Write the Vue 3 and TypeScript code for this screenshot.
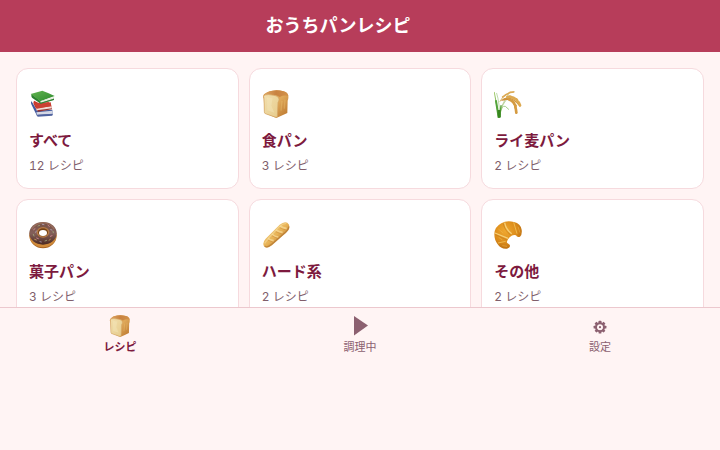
<script setup lang="ts">
import { ref } from 'vue'

interface Category {
  icon: string
  name: string
  count: number
}

interface Tab {
  id: string
  icon: string
  label: string
}

const categories: Category[] = [
  { icon: 'books', name: 'すべて', count: 12 },
  { icon: 'bread', name: '食パン', count: 3 },
  { icon: 'rye', name: 'ライ麦パン', count: 2 },
  { icon: 'donut', name: '菓子パン', count: 3 },
  { icon: 'baguette', name: 'ハード系', count: 2 },
  { icon: 'croissant', name: 'その他', count: 2 },
]

const tabs: Tab[] = [
  { id: 'recipes', icon: 'bread', label: 'レシピ' },
  { id: 'cooking', icon: 'play', label: '調理中' },
  { id: 'settings', icon: 'gear', label: '設定' },
]

const activeTab = ref('recipes')
const gearTeeth = [0, 45, 90, 135, 180, 225, 270, 315]
</script>

<template>
  <svg class="sprite" width="0" height="0" aria-hidden="true">
    <defs>
      <linearGradient id="g-green" x1="0" y1="0" x2="1" y2="1">
        <stop offset="0" stop-color="#63b450" /><stop offset="1" stop-color="#2c8a2c" />
      </linearGradient>
      <linearGradient id="g-front" x1="0" y1="0" x2="1" y2="1">
        <stop offset="0" stop-color="#f2dfae" /><stop offset="1" stop-color="#e6cb8b" />
      </linearGradient>
      <linearGradient id="g-side" x1="0" y1="0" x2="1" y2="1">
        <stop offset="0" stop-color="#d99645" /><stop offset=".5" stop-color="#dfa95a" /><stop offset="1" stop-color="#b8722a" />
      </linearGradient>
      <linearGradient id="g-top" x1="0" y1="0" x2="1" y2="0">
        <stop offset="0" stop-color="#dba766" /><stop offset=".5" stop-color="#c98240" /><stop offset="1" stop-color="#d2924a" />
      </linearGradient>
      <linearGradient id="g-stem" x1="0" y1="0" x2="0" y2="1">
        <stop offset="0" stop-color="#a6cf72" /><stop offset="1" stop-color="#3b8b1e" />
      </linearGradient>
      <linearGradient id="g-glaze" x1="0" y1="0" x2="0" y2="1">
        <stop offset="0" stop-color="#765044" /><stop offset=".5" stop-color="#84605a" /><stop offset="1" stop-color="#4c2920" />
      </linearGradient>
      <linearGradient id="g-loaf" x1="0.2" y1="0.2" x2="0.8" y2="0.8">
        <stop offset="0" stop-color="#f2cd7c" /><stop offset=".5" stop-color="#e8b356" /><stop offset="1" stop-color="#b97931" />
      </linearGradient>
      <radialGradient id="g-croissant" cx=".4" cy=".35" r=".7">
        <stop offset="0" stop-color="#efa830" /><stop offset=".6" stop-color="#dc8c1b" /><stop offset="1" stop-color="#b66a10" />
      </radialGradient>
    </defs>

    <symbol id="icon-books" viewBox="0 0 84 84">
      <path d="M7 33 Q4 39 8 45 L23 76 L71 74 L70 59 L25 62Z" fill="#435a9e" />
      <path d="M22 67 L70 62 L71 71 L24 75Z" fill="#d5d8e5" />
      <path d="M22 74 L71 72 L70 77 L26 80Z" fill="#50639f" />
      <path d="M15 32 Q11 39 15 44 L23 60 L68 53 L65 37 L35 42Z" fill="#c9372b" />
      <path d="M22 55 L67 49 L68 56 L23 62Z" fill="#f0dcd6" />
      <path d="M16 40 L59 36 L67 48 L24 56Z" fill="#cb4032" />
      <path d="M24 61 L69 55 L69 58 L27 65Z" fill="#9c3430" />
      <path d="M8 12 Q5 19 9 23 L35 41 L75 30 L75 23 L35 34Z" fill="#2c8030" />
      <path d="M5 12 L40 2 Q57 8 77 18 L34 34Z" fill="url(#g-green)" />
      <path d="M34 34 L76 20 L74 26 L35 38Z" fill="#e8efe0" />
      <path d="M34 40 L75 28" stroke="#338237" stroke-width="2" />
    </symbol>

    <symbol id="icon-bread" viewBox="0 0 84 84">
      <path d="M5 26 Q1 20 6 13 Q13 5 31 2 Q47 -1 64 4 Q78 8 79 18 Q80 25 77 32 L76 69 Q61 76 43 84 L8 70Z" fill="url(#g-side)" />
      <path d="M6 17 Q12 5 32 2 Q48 -1 65 4 Q78 8 79 18 Q66 14 53 21 Q48 15 30 14 Q14 12 6 17Z" fill="url(#g-top)" />
      <path d="M6 26 Q3 18 8 15 Q18 12 35 16 Q51 18 51 29 Q51 33 48 37 L46 80 Q43 83 39 81 L10 71 Q7 69 7 65Z" fill="url(#g-front)" stroke="#d3a565" stroke-width="2" />
      <path d="M15 22 L32 25 L28 47 L37 68 L16 61Z" fill="#f6e8bf" opacity=".4" />
      <path d="M60 33 L57 62 M69 29 L67 56" stroke="#efc574" stroke-width="4" opacity=".35" />
    </symbol>

    <symbol id="icon-rye" viewBox="0 0 84 84">
      <g fill="none" stroke-linecap="round">
        <path d="M14 82 Q8 44 1 7" stroke="url(#g-stem)" stroke-width="3" />
        <path d="M17 82 Q17 38 8 10" stroke="#9bc881" stroke-width="2" />
        <path d="M16 81 Q20 43 44 12" stroke="#b5c98a" stroke-width="2" />
        <path d="M17 80 Q22 39 43 24" stroke="#93bd6d" stroke-width="2" />
        <path d="M18 72 Q23 45 34 49 L44 58" stroke="#a6cf8b" stroke-width="3" />
        <path d="M14 82 L6 33" stroke="#53a43b" stroke-width="6" />
        <path d="M17 82 L21 47" stroke="#57a03b" stroke-width="4" />
        <path d="M16 82 L15 60" stroke="#37861f" stroke-width="9" stroke-linecap="butt" />
        <path d="M18 34 Q31 9 60 5" stroke="#d8b573" stroke-width="3" />
        <path d="M24 31 Q49 12 78 48" stroke="#cf9843" stroke-width="4" />
        <path d="M29 29 Q63 20 67 69" stroke="#cf913a" stroke-width="5" />
        <path d="M26 21 L33 16 M34 15 L40 12 M42 11 L48 7 M49 7 L59 6" stroke="#dcaa55" stroke-width="5" />
        <path d="M40 21 L47 20 M49 20 L57 23 M59 24 L67 29 M68 29 L72 37 M74 37 L78 46" stroke="#dda950" stroke-width="8" />
        <path d="M46 29 L52 32 M54 33 L60 39 M60 40 L65 48 M64 50 L66 59 M66 60 L67 68" stroke="#d59b41" stroke-width="8" />
      </g>
    </symbol>

    <symbol id="icon-donut" viewBox="0 0 84 84">
      <ellipse cx="42" cy="46" rx="40" ry="36" fill="#a86422" />
      <ellipse cx="42" cy="43" rx="41" ry="36" fill="#d08b3a" />
      <ellipse cx="42" cy="37" rx="41" ry="34" fill="url(#g-glaze)" />
      <path d="M8 24 Q22 5 42 6 Q63 4 76 25" fill="none" stroke="#a97966" stroke-width="4" opacity=".65" />
      <ellipse cx="42" cy="34" rx="19" ry="16" fill="#b77b46" />
      <ellipse cx="42" cy="34" rx="15" ry="12" fill="#764316" />
      <ellipse cx="42" cy="36" rx="12" ry="9" fill="#fff" />
      <g stroke-width="3" stroke-linecap="round" opacity=".7">
        <path d="M14 26l4-3 M23 51l5 2 M57 13l4 3 M64 46l5-2" stroke="#ef9cae" />
        <path d="M27 15l5-2 M13 40l2 5 M48 60l5-2 M72 31l1 4" stroke="#a8bb87" />
        <path d="M40 10l5 1 M65 26l4 1 M33 62l4 1 M20 34l2-4" stroke="#bcb4d2" />
        <path d="M17 55l5 2 M60 58l4-3" stroke="#dcb466" />
      </g>
    </symbol>

    <symbol id="icon-baguette" viewBox="0 0 84 84">
      <path d="M6 76 Q0 65 11 53 L53 11 Q66 0 76 5 Q86 13 80 26 Q75 34 62 44 L30 73 Q14 86 6 76Z" fill="url(#g-loaf)" />
      <path d="M8 75 Q15 82 29 70 L65 38 Q81 26 80 17" fill="none" stroke="#aa6b29" stroke-width="4" opacity=".55" />
      <path d="M18 52 Q23 57 35 59 M30 39 Q37 47 49 48 M42 27 Q51 33 62 34 M54 15 Q62 22 74 22" fill="none" stroke="#f7da96" stroke-width="5" opacity=".75" />
      <path d="M17 57 L32 63 M29 44 L46 52 M41 32 L59 39 M53 20 L71 27" stroke="#cc8737" stroke-width="2" opacity=".7" />
      <path d="M8 67 L20 51 L52 17 Q62 7 73 7" fill="none" stroke="#fae2a6" stroke-width="4" opacity=".5" />
    </symbol>

    <symbol id="icon-croissant" viewBox="0 0 84 84">
      <path d="M1 40 Q1 18 22 7 Q38 -3 60 3 Q80 8 83 26 Q85 40 78 47 Q69 50 66 43 Q57 39 48 48 Q37 57 39 65 L47 71 Q51 80 39 83 Q21 85 11 70 Q1 57 1 40Z" fill="url(#g-croissant)" />
      <path d="M32 5 Q35 25 53 38 M3 36 Q20 43 42 52" fill="none" stroke="#f5cf77" stroke-width="4" />
      <path d="M12 66 L35 61 M59 4 L69 38" fill="none" stroke="#eeb94e" stroke-width="3" />
      <path d="M28 8 Q32 29 50 42 M4 41 L39 57" fill="none" stroke="#ba721a" stroke-width="2" opacity=".7" />
      <path d="M13 24 L28 36 M14 49 L25 57 M25 74 L39 76 M72 17 L78 35" stroke="#f3bb50" stroke-width="3" opacity=".5" />
    </symbol>

    <symbol id="icon-play" viewBox="0 0 22 22">
      <path d="M5 1 L19 10.500 L5 20.500Z" fill="currentColor" />
    </symbol>

    <symbol id="icon-gear" viewBox="0 0 22 22">
      <g fill="currentColor">
        <rect v-for="angle in gearTeeth" :key="angle" x="9.600" y="5.800" width="2.800" height="3" rx=".5" :transform="`rotate(${angle} 11 12.200)`" />
        <circle cx="11" cy="12.200" r="1.100" />
      </g>
      <circle cx="11" cy="12.200" r="4" fill="none" stroke="currentColor" stroke-width="2" />
    </symbol>
  </svg>

  <div class="app">
    <header class="header">
      <h1 class="title">おうちパンレシピ</h1>
      <span class="header-side"></span>
    </header>

    <main class="content">
      <div class="grid">
        <button v-for="category in categories" :key="category.name" class="card" type="button">
          <svg class="card-icon" aria-hidden="true"><use :href="`#icon-${category.icon}`" /></svg>
          <span class="card-name">{{ category.name }}</span>
          <span class="card-count">{{ category.count }} レシピ</span>
        </button>
      </div>
    </main>

    <nav class="tabs">
      <button
        v-for="tab in tabs"
        :key="tab.id"
        type="button"
        class="tab"
        :class="{ active: activeTab === tab.id }"
        @click="activeTab = tab.id"
      >
        <svg class="tab-icon" aria-hidden="true"><use :href="`#icon-${tab.icon}`" /></svg>
        <span>{{ tab.label }}</span>
      </button>
    </nav>
  </div>
</template>

<style>
body {
  margin: 0;
  background: #fff4f4;
}
</style>

<style scoped>
.sprite {
  display: block;
}

.app {
  display: flex;
  flex-direction: column;
  height: 80vh;
  color: #7d1a3e;
  font-family: Inter, "Noto Sans CJK JP", sans-serif;
}

.header {
  display: flex;
  flex: none;
  align-items: center;
  height: 52px;
  background: #b73d5a;
  color: #fff;
}

.title {
  flex: 1;
  margin: 0;
  font-size: 18px;
  line-height: 24px;
  font-weight: 700;
  text-align: center;
}

.header-side {
  width: 44px;
}

.content {
  flex: 1;
  min-height: 0;
  overflow-y: auto;
  scrollbar-width: none;
}

.grid {
  display: grid;
  grid-template-columns: repeat(3, 1fr);
  gap: 10px;
  padding: 16px;
}

.card {
  display: flex;
  flex-direction: column;
  align-items: flex-start;
  gap: 5px;
  padding: 21px 12px 12px;
  border: 1px solid #f6dade;
  border-radius: 12px;
  background: #fff;
  color: inherit;
  font-family: inherit;
  text-align: left;
  cursor: pointer;
}

.card-icon {
  width: 28px;
  height: 28px;
  margin-bottom: 8px;
}

.card-name {
  font-size: 15px;
  line-height: 20px;
  font-weight: 700;
}

.card-count {
  color: #805e6b;
  font-size: 12px;
  line-height: 20px;
  font-variant-numeric: tabular-nums;
}

.tabs {
  display: flex;
  flex: none;
  border-top: 1px solid #ecc8ce;
  background: #fff4f4;
}

.tab {
  display: flex;
  flex: 1;
  flex-direction: column;
  align-items: center;
  gap: 3px;
  padding: 7px 0 6px;
  border: 0;
  background: none;
  color: #8c6070;
  font-family: inherit;
  font-size: 11px;
  line-height: 14px;
  cursor: pointer;
}

.tab.active {
  color: #7d1a3e;
  font-weight: 700;
}

.tab-icon {
  width: 22px;
  height: 22px;
}
</style>
